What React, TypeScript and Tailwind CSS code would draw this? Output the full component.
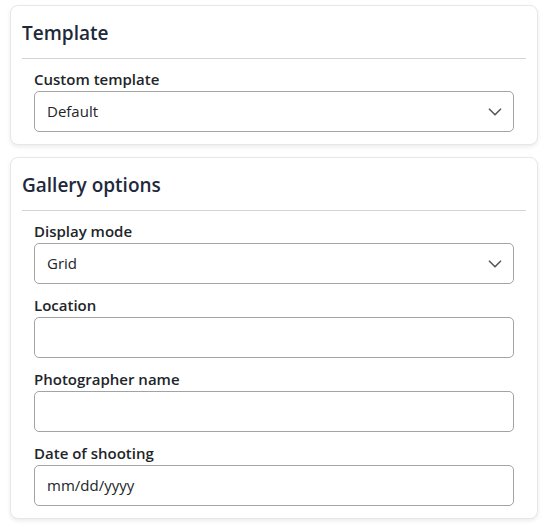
import { ChevronDown } from 'lucide-react';

const font = { fontFamily: '"Open Sans", "Noto Sans", sans-serif' };

function Label({ children }: { children: React.ReactNode }) {
  return (
    <label className="block text-[15px] leading-[22px] font-semibold text-[#212529] mb-px">
      {children}
    </label>
  );
}

function SelectBox({ value }: { value: string }) {
  return (
    <div className="h-[41px] rounded-[5px] border border-[#a3a3a3] bg-white flex items-center pl-3 pr-[7px]">
      <span className="flex-1 text-[15px] text-[#212529]">{value}</span>
      <ChevronDown className="w-[22px] h-[22px] text-[#555b62]" strokeWidth={1.8} />
    </div>
  );
}

function TextBox({ placeholder }: { placeholder?: string }) {
  return (
    <div className="h-[41px] rounded-[5px] border border-[#a3a3a3] bg-white flex items-center pl-3 pr-4">
      {placeholder && <span className="text-[15px] text-[#212529]">{placeholder}</span>}
    </div>
  );
}

function Card({ title, children }: { title: string; children: React.ReactNode }) {
  return (
    <div className="bg-white rounded-lg border border-[#e5e7eb] shadow-[0_2px_4px_rgba(0,0,0,0.08)]">
      <div className="px-[11px] pt-[13px]">
        <h2 className="text-[19px] leading-7 font-semibold text-[#1e293b] pb-[11px] border-b border-[#d4d4d4]">
          {title}
        </h2>
      </div>
      <div className="px-[23px] pt-[9px] pb-3 flex flex-col gap-[10px]">{children}</div>
    </div>
  );
}

export default function App() {
  return (
    <div className="min-h-screen bg-white px-[10px] pt-[5px] flex flex-col gap-3" style={font}>
      <Card title="Template">
        <div>
          <Label>Custom template</Label>
          <SelectBox value="Default" />
        </div>
      </Card>
      <Card title="Gallery options">
        <div>
          <Label>Display mode</Label>
          <SelectBox value="Grid" />
        </div>
        <div>
          <Label>Location</Label>
          <TextBox />
        </div>
        <div>
          <Label>Photographer name</Label>
          <TextBox />
        </div>
        <div>
          <Label>Date of shooting</Label>
          <TextBox placeholder="mm/dd/yyyy" />
        </div>
      </Card>
    </div>
  );
}
